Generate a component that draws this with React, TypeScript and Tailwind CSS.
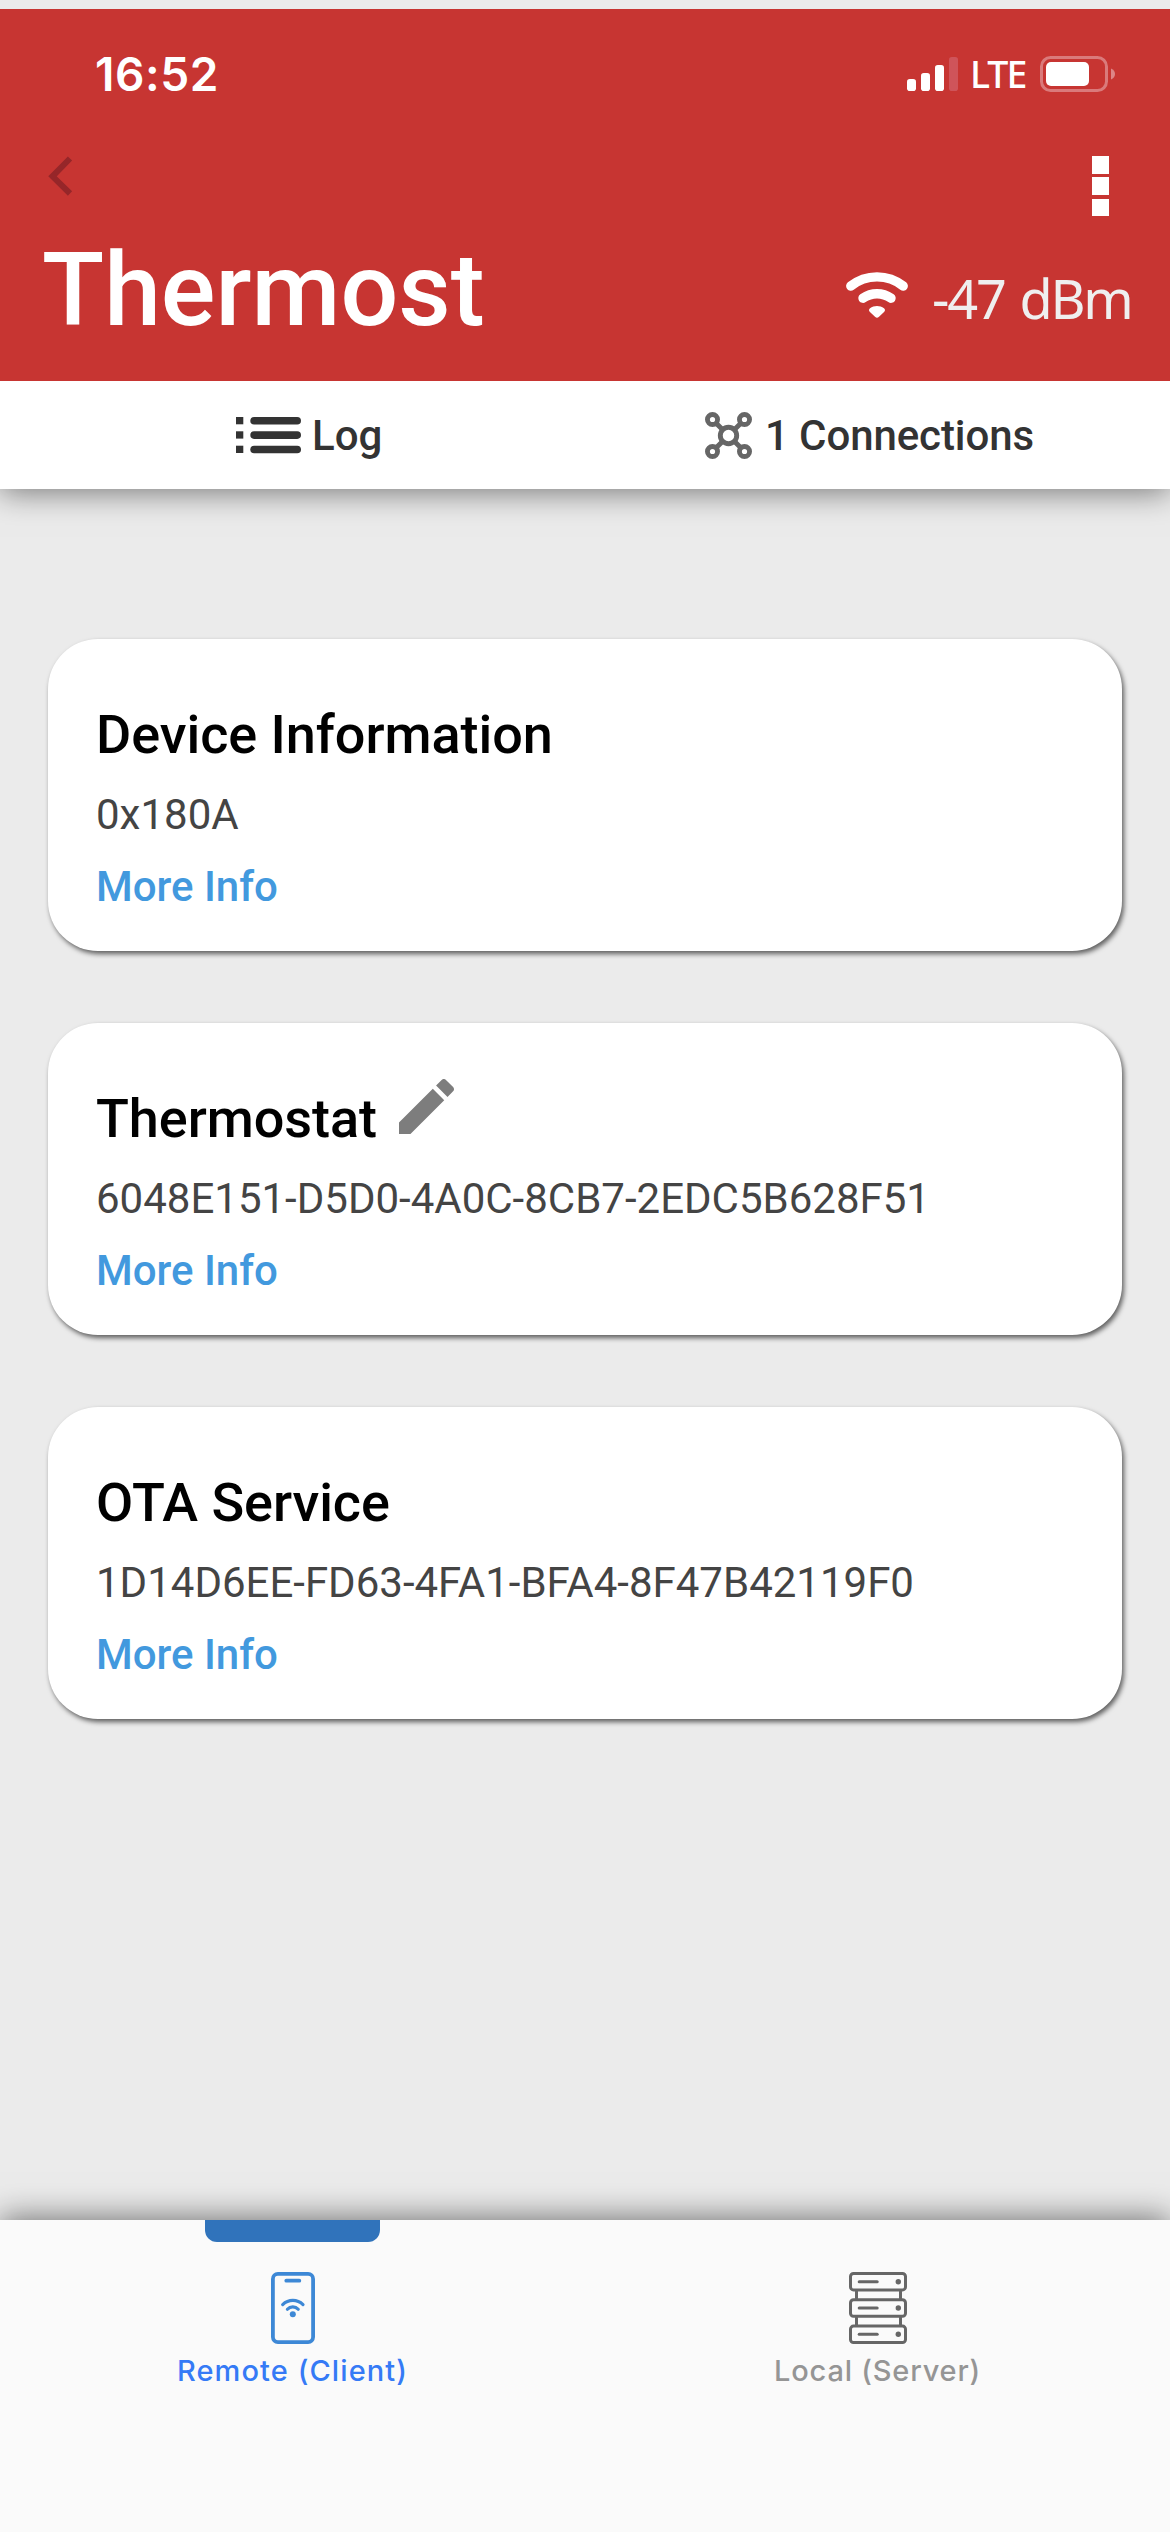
import React from "react";

type Service = { name: string; uuid: string; editable?: boolean };

const services: Service[] = [
  { name: "Device Information", uuid: "0x180A" },
  { name: "Thermostat", uuid: "6048E151-D5D0-4A0C-8CB7-2EDC5B628F51", editable: true },
  { name: "OTA Service", uuid: "1D14D6EE-FD63-4FA1-BFA4-8F47B42119F0" },
];

function SignalIcon() {
  return (
    <svg width="51" height="34" viewBox="0 0 51 34" fill="white">
      <rect x="0" y="22" width="9" height="12" rx="2.8" />
      <rect x="14" y="16" width="9" height="18" rx="2.8" />
      <rect x="28" y="8" width="9" height="26" rx="2.8" />
      <rect x="42" y="0" width="9" height="34" rx="2.8" fill="#cf545a" />
    </svg>
  );
}

function BatteryIcon() {
  return (
    <svg width="75" height="36" viewBox="0 0 75 36">
      <rect x="1.5" y="1.5" width="65" height="33" rx="9" fill="none" stroke="#da7a7b" strokeWidth="3" />
      <rect x="6" y="6" width="43" height="24" rx="5" fill="white" />
      <path d="M71 12.5c2.700 1 4 3.200 4 5.500s-1.300 4.500-4 5.500z" fill="#dd8586" />
    </svg>
  );
}

function BackIcon() {
  return (
    <svg width="25" height="40" viewBox="0 0 25 40" fill="none" stroke="#962629" strokeWidth="6">
      <path d="M22 2.500L4.500 20.300L22 37.500" />
    </svg>
  );
}

function WifiIcon() {
  return (
    <svg width="62" height="46" viewBox="0 0 62 46" fill="none" stroke="white" strokeWidth="9.4" strokeLinecap="round">
      <path d="M4.800 14C20 1.800 42 1.800 57.200 14" />
      <path d="M17 26.200C25.500 20.300 36.500 20.300 45 26.200" />
      <path
        d="M24 36.200C28 33.300 34 33.300 38 36.200C39.500 37.300 39.200 39 37.800 40.200L33 44.700C31.600 46 30.400 46 29 44.700L24.200 40.200C22.800 39 22.500 37.300 24 36.200Z"
        fill="white"
        stroke="none"
      />
    </svg>
  );
}

function ListIcon() {
  return (
    <svg width="65" height="37" viewBox="0 0 65 37" fill="#333">
      {[0, 14.3, 28.7].map((y) => (
        <g key={y}>
          <rect x="0" y={y} width="7.300" height="7.300" />
          <rect x="14.300" y={y} width="50.700" height="7.600" rx="3.800" />
        </g>
      ))}
    </svg>
  );
}

function NodesIcon() {
  return (
    <svg width="47" height="47" viewBox="0 0 47 47" fill="none" stroke="#666" strokeWidth="4.900">
      <circle cx="7.500" cy="7.500" r="5.050" />
      <circle cx="39.500" cy="7.500" r="5.050" />
      <circle cx="7.500" cy="39.500" r="5.050" />
      <circle cx="39.500" cy="39.500" r="5.050" />
      <circle cx="23.500" cy="23.500" r="8.200" />
      <path d="M11.200 11.200L17.700 17.700M35.800 11.200L29.300 17.700M11.200 35.800L17.700 29.300M35.800 35.800L29.300 29.300" />
    </svg>
  );
}

function PencilIcon() {
  return (
    <svg width="55" height="55" viewBox="3 3 18 18" fill="#7d7d7d">
      <path d="M3 17.250V21h3.750L17.810 9.940l-3.750-3.750L3 17.250zM20.710 7.040c.390-.390.390-1.020 0-1.410l-2.340-2.340c-.390-.390-1.020-.390-1.410 0l-1.830 1.830 3.750 3.750 1.830-1.830z" />
    </svg>
  );
}

function PhoneIcon() {
  return (
    <svg width="44" height="72" viewBox="0 0 44 72" fill="none" stroke="#3d88d6" strokeWidth="3.800" strokeLinecap="round">
      <rect x="1.900" y="1.900" width="40.200" height="68.200" rx="5" />
      <path d="M15.300 8.700H28.300" strokeWidth="3.800" />
      <path d="M11.700 32.600C17.500 27 26.200 27 32 32.600" strokeWidth="3.200" />
      <path d="M16.400 37.300C19.300 34 24.300 34 27.200 37.300" strokeWidth="3.200" />
      <circle cx="21.800" cy="42.300" r="3" fill="#3d88d6" stroke="none" />
    </svg>
  );
}

function ServerIcon() {
  return (
    <svg width="58" height="72" viewBox="0 0 58 72" fill="none" stroke="#666" strokeWidth="3" strokeLinecap="round">
      {[0, 26.3, 52.6].map((y) => (
        <g key={y}>
          <rect x="1.500" y={y + 1.500} width="55" height="16.400" rx="3" />
          <path d={`M10.200 ${y + 9.700}H28.200`} />
          <circle cx="49.300" cy={y + 9.700} r="2.700" fill="#666" stroke="none" />
        </g>
      ))}
      <path d="M7.500 19.400V26.500M51.500 19.400V26.500M7.500 45.700V52.800M51.500 45.700V52.800" />
    </svg>
  );
}

function ServiceCard({ name, uuid, editable }: Service) {
  return (
    <section className="h-[312px] rounded-[50px] bg-white px-12 pt-16 shadow-[2px_3px_5px_rgba(0,0,0,0.6)]">
      <div className="flex h-16 items-start">
        <h2 className="text-[54px] leading-[64px] font-medium tracking-[-0.05px] text-black">{name}</h2>
        {editable && (
          <button className="-mt-2 ml-[22px]" aria-label="Rename">
            <PencilIcon />
          </button>
        )}
      </div>
      <p className="mt-[18px] text-[42px] leading-[60px] text-[#444]">{uuid}</p>
      <a className="mt-3 block text-[42px] leading-[60px] font-medium text-[#4299de]">More Info</a>
    </section>
  );
}

export default function App() {
  return (
    <div className="flex h-[2532px] w-[1170px] flex-col overflow-hidden bg-[#ebebeb] pt-[9px] font-['Roboto',sans-serif]">
      <header className="z-10 h-[372px] shrink-0 bg-[#c73532] pt-[35px]">
        <div className="flex h-[60px] items-center justify-between pr-[55px] pl-[95px] text-white">
          <span className="font-['Inter',sans-serif] text-[46px] leading-[60px] font-semibold tracking-[0.6px]">16:52</span>
          <div className="flex items-center">
            <SignalIcon />
            <span className="ml-[12px] w-[70px] font-['Noto_Sans',sans-serif] text-[37.500px] leading-[60px] font-medium tracking-[-1.9px]">
              LTE
            </span>
            <BatteryIcon />
          </div>
        </div>
        <div className="mt-[52px] flex h-[60px] items-start justify-between pr-[61px] pl-12">
          <BackIcon />
          <div className="flex h-[60px] flex-col justify-between">
            <i className="size-[17.500px] bg-white" />
            <i className="size-[17.500px] bg-white" />
            <i className="size-[17.500px] bg-white" />
          </div>
        </div>
        <div className="mt-[14px] flex h-[120px] items-start justify-between pr-[38px] pl-[42px]">
          <h1 className="text-[102px] leading-[120px] font-medium text-white">Thermost</h1>
          <div className="mt-[38px] flex h-[60px] items-start">
            <div className="mt-1">
              <WifiIcon />
            </div>
            <span className="ml-[24px] w-[200px] font-['Noto_Sans',sans-serif] text-[54px] leading-[60px] tracking-[-2.2px] whitespace-nowrap text-[#efefef] [word-spacing:3px]">
              -47 dBm
            </span>
          </div>
        </div>
      </header>

      <nav className="grid h-[108px] shrink-0 grid-cols-2 bg-white text-[42px] leading-[60px] font-medium text-[#333] shadow-[0_3px_30px_rgba(0,0,0,0.5)]">
        <div className="flex items-center pl-[236px]">
          <ListIcon />
          <span className="mt-0.5 ml-[11px]">Log</span>
        </div>
        <div className="flex items-center pl-[120px]">
          <NodesIcon />
          <span className="mt-0.5 ml-[13px] tracking-[-0.1px]">1 Connections</span>
        </div>
      </nav>

      <main className="flex grow flex-col gap-[72px] px-12 pt-[150px]">
        {services.map((s) => (
          <ServiceCard key={s.name} {...s} />
        ))}
      </main>

      <footer className="grid h-[312px] shrink-0 grid-cols-2 bg-[#fafafa] font-['Inter',sans-serif] text-[29px] leading-10 shadow-[0_-3px_30px_rgba(0,0,0,0.5)]">
        <div className="flex flex-col items-center text-[#357af6]">
          <i className="mb-[30px] h-[22px] w-[175px] rounded-b-[12px] bg-[#3073bb]" />
          <PhoneIcon />
          <span className="mt-[7px] font-medium tracking-[1.1px]">Remote (Client)</span>
        </div>
        <div className="flex flex-col items-center pt-[52px] text-[#959595]">
          <ServerIcon />
          <span className="mt-[7px] font-medium tracking-[0.800px]">Local (Server)</span>
        </div>
      </footer>
    </div>
  );
}
